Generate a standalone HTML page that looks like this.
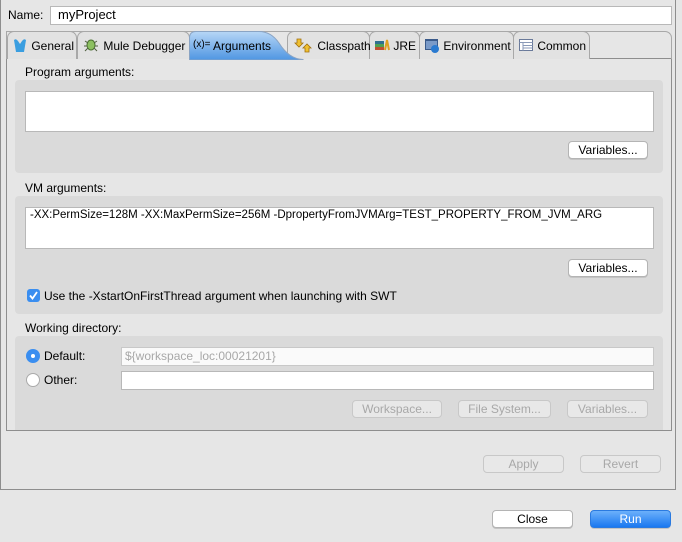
<!DOCTYPE html>
<html><head><style>
*{box-sizing:border-box;margin:0;padding:0}
body{width:682px;height:542px;background:#e6e6e6;font-family:"Liberation Sans",sans-serif;font-size:12px;color:#000;position:relative;overflow:hidden}
.a{position:absolute}
.t{position:absolute;white-space:nowrap;line-height:14px}
.in{position:absolute;background:#fff;border:1px solid #b8b8b8}
.grp{position:absolute;background:#dadada;border-radius:4px}
.btn{position:absolute;height:18px;background:#fff;border:1px solid #b4b4b4;border-radius:4px;box-shadow:0 1px 0 #c4c4c4;text-align:center;line-height:16px;font-size:12px}
.dis{background:#e8e8e8;color:#a8a8a8;border-color:#c8c8c8;box-shadow:none}
.tab{position:absolute;top:31px;height:28px;border:1px solid #a8a8a8;border-bottom:none;border-radius:7px 7px 0 0;background:#e2e2e2;font-size:12px;line-height:28px;padding-left:4px;white-space:nowrap}
</style></head><body>
<div class="a" style="left:0;top:0;width:676px;height:490px;border:1px solid #8e8e8e;border-top:none"></div>
<div class="t" style="left:8px;top:8px">Name:</div>
<div class="in" style="left:50px;top:6px;width:622px;height:19px"></div>
<div class="t" style="left:58px;top:8px;font-size:13px">myProject</div>

<div class="a" style="left:6px;top:58px;width:666px;height:373px;border:1px solid #8e8e8e;background:#e6e6e6"></div>
<div class="a" style="left:6px;top:31px;width:666px;height:28px;border:1px solid #a8a8a8;border-bottom:none;border-radius:0 7px 0 0"></div>
<div class="tab" style="left:7px;width:70px"><svg width="16" height="16" style="vertical-align:-3px"><path d="M2 3 Q4 1 6 4 L8 7 L10 4 Q12 1 14 3 L13 9 L12 15 L4 15 L3 9Z" fill="#3a9ee0"/></svg> General</div>
<div class="tab" style="left:77px;width:113px"><svg width="18" height="16" style="vertical-align:-3px"><ellipse cx="9" cy="8" rx="4" ry="5" fill="#8cc060" stroke="#4a7030"/><path d="M3 4 L6 6 M15 4 L12 6 M2 9 H5 M16 9 H13 M3 14 L6 11 M15 14 L12 11" stroke="#506040"/></svg> Mule Debugger</div>
<div class="tab" style="left:369px;width:51px"><svg width="16" height="14" style="vertical-align:-2px"><rect x="1" y="3" width="9" height="3" fill="#307090"/><rect x="1" y="6" width="9" height="3" fill="#50a050"/><rect x="1" y="9" width="9" height="3" fill="#c05030"/><path d="M11 12 L13 2 L15 12" stroke="#e0a020" stroke-width="2" fill="none"/></svg> JRE</div>
<div class="tab" style="left:419px;width:95px"><svg width="16" height="15" style="vertical-align:-3px"><rect x="1" y="1" width="13" height="11" fill="#3a5a8a"/><rect x="2" y="3" width="11" height="8" fill="#7a9ac8"/><circle cx="11" cy="11" r="4" fill="#2a7ad0"/></svg> Environment</div>
<div class="tab" style="left:513px;width:77px"><svg width="16" height="14" style="vertical-align:-2px"><rect x="1.5" y="1.5" width="13" height="11" fill="#fff" stroke="#6a7a9a"/><path d="M1.5 4.5 H14.5 M5 4.5 V12.5 M5 7.5 H14.5 M5 10 H14.5" stroke="#8a9ab8"/></svg> Common</div>
<div class="tab" style="left:287px;width:83px;padding-left:6px"><svg width="20" height="15" style="vertical-align:-3px"><path d="M3 1 H7 V5 H9 L5 9 L1 5 H3Z" fill="#f0c030" stroke="#a07010" stroke-width=".8"/><path d="M11 14 H15 V10 H17 L13 6 L9 10 H11Z" fill="#f0c030" stroke="#a07010" stroke-width=".8"/></svg> Classpath</div>
<svg class="a" style="left:189px;top:31px" width="115" height="29"><defs><linearGradient id="g" x1="0" y1="0" x2="0" y2="1"><stop offset="0" stop-color="#b7d6f6"/><stop offset="1" stop-color="#4f96e2"/></linearGradient></defs><path d="M0.5 29 V7 Q0.5 0.5 7 0.5 H70 Q82 0.5 90 12 Q100 28 114 28.5 V29Z" fill="url(#g)" stroke="#8aa4c4"/></svg>
<div class="t" style="left:193px;top:38px;font-size:10px">(x)=</div>
<div class="t" style="left:213px;top:39px">Arguments</div>

<div class="t" style="left:25px;top:65px">Program arguments:</div>
<div class="grp" style="left:15px;top:80px;width:648px;height:93px"></div>
<div class="in" style="left:25px;top:91px;width:629px;height:41px"></div>
<div class="btn" style="left:568px;top:141px;width:80px">Variables...</div>

<div class="t" style="left:25px;top:181px">VM arguments:</div>
<div class="grp" style="left:15px;top:196px;width:648px;height:118px"></div>
<div class="in" style="left:25px;top:207px;width:629px;height:42px"></div>
<div class="t" style="left:30px;top:208px;font-size:11.5px">-XX:PermSize=128M -XX:MaxPermSize=256M -DpropertyFromJVMArg=TEST_PROPERTY_FROM_JVM_ARG</div>
<div class="btn" style="left:568px;top:259px;width:80px">Variables...</div>
<div class="a" style="left:27px;top:289px;width:13px;height:13px;border-radius:3px;background:#3a8ef0"></div>
<svg class="a" style="left:27px;top:289px" width="13" height="13"><path d="M3 6.5 L5.5 9.5 L10 3" stroke="#fff" stroke-width="1.8" fill="none"/></svg>
<div class="t" style="left:44px;top:289px">Use the -XstartOnFirstThread argument when launching with SWT</div>

<div class="t" style="left:25px;top:321px">Working directory:</div>
<div class="grp" style="left:15px;top:336px;width:648px;height:94px;border-radius:4px 4px 0 0"></div>
<div class="a" style="left:26px;top:349px;width:14px;height:14px;border-radius:50%;background:#3a8ef0"></div>
<div class="a" style="left:31px;top:354px;width:4px;height:4px;border-radius:50%;background:#fff"></div>
<div class="t" style="left:44px;top:349px">Default:</div>
<div class="in" style="left:121px;top:347px;width:533px;height:19px;background:#fafafa;border-color:#c8c8c8"></div>
<div class="t" style="left:125px;top:349px;color:#a8a8a8">${workspace_loc:00021201}</div>
<div class="a" style="left:26px;top:373px;width:14px;height:14px;border-radius:50%;background:#fff;border:1px solid #aaa"></div>
<div class="t" style="left:44px;top:373px">Other:</div>
<div class="in" style="left:121px;top:371px;width:533px;height:19px"></div>
<div class="btn dis" style="left:352px;top:400px;width:90px">Workspace...</div>
<div class="btn dis" style="left:458px;top:400px;width:93px">File System...</div>
<div class="btn dis" style="left:567px;top:400px;width:81px">Variables...</div>

<div class="btn dis" style="left:483px;top:455px;width:81px">Apply</div>
<div class="btn dis" style="left:580px;top:455px;width:81px">Revert</div>

<div class="btn" style="left:492px;top:510px;width:81px">Close</div>
<div class="btn" style="left:590px;top:510px;width:81px;background:linear-gradient(#6cb0fb,#1a78f0);border-color:#2a7ae0;color:#fff">Run</div>
</body></html>
